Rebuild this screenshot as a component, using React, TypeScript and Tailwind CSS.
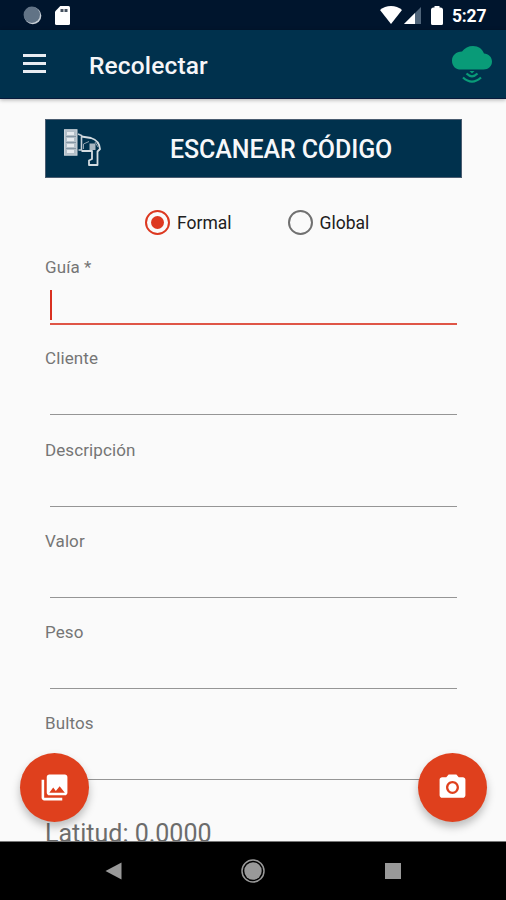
import { useState } from "react";

const campos = ["Guía *", "Cliente", "Descripción", "Valor", "Peso", "Bultos"];

function BarraEstado() {
  return (
    <div className="flex h-[30px] shrink-0 items-center justify-between bg-[#00152d] pl-[23px] pr-[19px]">
      <div className="flex items-center gap-[13px]">
        <svg width="19" height="19" viewBox="0 0 19 19">
          <circle cx="9.800" cy="9.800" r="8.500" fill="#c6ced6" />
          <circle cx="8.800" cy="8.800" r="8.200" fill="#617386" />
        </svg>
        <svg width="15" height="19" viewBox="0 0 15 19">
          <path d="M5.3 0H13.5Q15 0 15 1.5V17.5Q15 19 13.5 19H1.5Q0 19 0 17.5V5.5Z" fill="#fff" />
          <path d="M5.500 3h3v3h-3zM9.500 3h3v3h-3z" fill="#44505f" />
        </svg>
      </div>

      <div className="flex items-center">
        <svg width="22" height="18" viewBox="0 0 22 18">
          <path d="M11 18L0 4Q4.600 0 11 0T22 4Z" fill="#fff" />
        </svg>
        <svg width="17" height="17" viewBox="0 0 17 17" className="ml-[2px] mt-px">
          <path d="M17 0V17H0Z" fill="#50657a" />
          <path d="M11 6V17H0Z" fill="#fff" />
        </svg>
        <svg width="12" height="19" viewBox="0 0 12 19" className="ml-[10px]">
          <path d="M3.500 0H8.500V1.500H9.500Q12 1.500 12 4V17.500Q12 19 10.500 19H1.500Q0 19 0 17.500V4Q0 1.500 2.500 1.500H3.500Z" fill="#fff" />
        </svg>
        <span className="ml-[9px] mt-[3px] w-[35px] whitespace-nowrap text-[17.5px] font-bold leading-none tracking-[-0.2px] text-white">5:27</span>
      </div>
    </div>
  );
}

function IconoNube() {
  return (
    <svg width="40" height="38" viewBox="0 0 40 38" fill="none" className="mt-[2px]">
      <path d="M9 23.500C3.500 23.500 0 20 0 14.700 0 9.500 4 5.500 10 5.500 12.500 2 16.500 0 21 0 26.500 0 30.500 3 32 7.500 36.500 8 40 11 40 15.500 40 20 36.500 23.500 31.500 23.500Z" fill="#099b78" />
      <path d="M17.500 25H22.500L20 27.500Z" fill="#099b78" />
      <path d="M14.500 27.500Q20 33 25.500 27.500M11 31.500Q20 39.800 29 31.500" stroke="#099b78" strokeWidth="2.200" />
    </svg>
  );
}

function IconoEscaner() {
  return (
    <svg width="37" height="38" viewBox="0 0 37 38" fill="none" className="-mt-[2px]">
      <rect x="0.500" y="0.700" width="12.500" height="25.500" fill="#b3bfc8" stroke="#cbd3da" />
      <path d="M3 3h7v3H3zM3 9h7v3H3zM3 15h7v3H3zM3 21h7v3H3z" fill="#e6eaee" />
      <path d="M2 7.500h10M2 13.500h10M2 19.500h10" stroke="#8697a5" strokeWidth="1" />
      <path d="M14 5L17.500 6.500V21H14.500" stroke="#c3cdd5" strokeWidth="1.600" />
      <path d="M17.500 7.500L27 9C32 10.500 35.500 14.500 36 20L33.500 22.500V36H25V31.500L28 30V22H17.500" stroke="#d4dce1" strokeWidth="1.800" strokeLinejoin="round" />
      <path d="M19.500 20V15L25 12.500M31 13L34 18" stroke="#90a1af" strokeWidth="1" />
      <path d="M25.500 14.500H31.500V21H25.500Z" fill="#a9b7c1" />
    </svg>
  );
}

export default function App() {
  const [tipo, setTipo] = useState("Formal");

  return (
    <main className="relative flex h-[900px] w-[506px] flex-col overflow-hidden bg-[#fafafa] font-[Roboto,sans-serif]">
      <BarraEstado />

      {/* ENCABEZADO */}
      <header className="z-10 flex h-[69px] shrink-0 items-center border-b border-[#081a3b] bg-[#00314d] pl-[23px] pr-[14px] shadow-[0_1px_4px_rgba(0,0,0,0.3)]">
        <button className="-mt-px flex w-[23px] flex-col gap-[5px]">
          <span className="h-[3px] w-full bg-[#e8ecf2]" />
          <span className="h-[3px] w-full bg-[#e8ecf2]" />
          <span className="h-[3px] w-full bg-[#e8ecf2]" />
        </button>
        <h1 className="ml-[43px] mt-[4px] flex-1 text-[24.5px] font-medium leading-none tracking-[0.15px] text-[#f5f6f8]">Recolectar</h1>
        <IconoNube />
      </header>

      {/* FORMULARIO */}
      <div className="min-h-0 flex-1 overflow-hidden px-[45px] pt-5">
        <button className="flex h-[59px] w-[417px] items-center border border-[#4a5c70] bg-[#00314d] pl-[18px]">
          <IconoEscaner />
          <span className="ml-[69px] mt-[2px] whitespace-nowrap text-[25px] font-medium leading-none tracking-[-0.1px] text-[#f7f8fa]">ESCANEAR CÓDIGO</span>
        </button>

        <div className="mt-[31px] flex h-[26px] pl-[100px]">
          {["Formal", "Global"].map((opcion) => (
            <label key={opcion} className="flex w-[142.500px] items-center text-[17.5px] leading-none text-[#202020]">
              <input type="radio" name="tipo" className="sr-only" checked={tipo === opcion} onChange={() => setTipo(opcion)} />
              <span className={tipo === opcion ? "flex size-[25px] items-center justify-center rounded-full border-[2.500px] border-[#dc3820]" : "size-[25px] rounded-full border-[2.500px] border-[#707070]"}>
                {tipo === opcion && <span className="size-[13px] rounded-full bg-[#dd3820]" />}
              </span>
              <span className="ml-[7px] mt-[3px]">{opcion}</span>
            </label>
          ))}
        </div>

        <div className="mt-[22px]">
          {campos.map((campo, i) => (
            <div key={campo} className="h-[91.300px]">
              <label className="block h-[20px] whitespace-nowrap text-[17px] leading-[20px] tracking-[0.1px] text-[#757575]">{campo}</label>
              <div className={i === 0 ? "ml-[5px] h-[48px] w-[407px] border-b-2 border-[#df5546] pt-[13px]" : "ml-[5px] h-[47px] w-[407px] border-b border-[#959595]"}>
                {i === 0 && <div className="h-[30px] w-[2px] bg-[#d93020]" />}
              </div>
            </div>
          ))}
        </div>

        <p className="mt-[14px] text-[25px] leading-[29px] text-[#6c6c6c]">Latitud: 0.0000</p>
      </div>

      {/* BOTONES FLOTANTES */}
      <button className="absolute left-[20px] top-[753px] flex size-[69px] items-center justify-center rounded-full bg-[#df401d] shadow-[0_5px_8px_rgba(0,0,0,0.25)]">
        <svg width="31" height="31" viewBox="0 0 24 24" fill="#fff">
          <path d="M22 16V4c0-1.100-.9-2-2-2H8c-1.100 0-2 .9-2 2v12c0 1.100.9 2 2 2h12c1.100 0 2-.9 2-2zm-11-4l2.030 2.710L16 11l4 5H8l3-4zM2 6v14c0 1.100.9 2 2 2h14v-2H4V6H2z" />
        </svg>
      </button>
      <button className="absolute left-[418px] top-[753px] flex size-[69px] items-center justify-center rounded-full bg-[#df401d] shadow-[0_5px_8px_rgba(0,0,0,0.25)]">
        <svg width="31" height="31" viewBox="0 0 24 24" fill="#fff">
          <circle cx="12" cy="12" r="3.200" />
          <path d="M9 2L7.170 4H4c-1.100 0-2 .9-2 2v12c0 1.100.9 2 2 2h16c1.100 0 2-.9 2-2V6c0-1.100-.9-2-2-2h-3.170L15 2H9zm3 15c-2.760 0-5-2.240-5-5s2.240-5 5-5 5 2.240 5 5-2.240 5-5 5z" />
        </svg>
      </button>

      {/* NAVEGACIÓN */}
      <nav className="flex h-[59px] shrink-0 items-center border-t border-[#777] bg-black pl-[105px]">
        <svg width="17" height="18" viewBox="0 0 17 18">
          <path d="M16.500 .5V17.500L.5 9Z" fill="#999" />
        </svg>
        <svg width="24" height="24" viewBox="0 0 24 24" className="ml-[119px]">
          <circle cx="12" cy="12" r="11" fill="none" stroke="#999" strokeWidth="1.500" />
          <circle cx="12" cy="12" r="8.700" fill="#999" />
        </svg>
        <span className="ml-[120px] size-[16px] bg-[#999]" />
      </nav>
    </main>
  );
}
